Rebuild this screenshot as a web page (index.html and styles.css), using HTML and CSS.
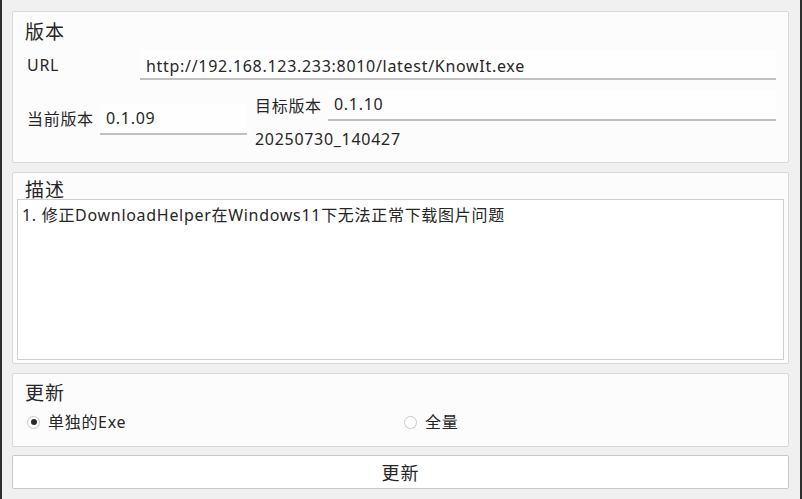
FILE: index.html
```html
<!DOCTYPE html>
<html lang="zh">
<head>
<meta charset="utf-8">
<link rel="stylesheet" href="styles.css">
</head>
<body>
<div class="window">
  <section class="group g-version">
    <div class="title">版本</div>
    <div class="row url-row">
      <span class="label url-label">URL</span>
      <div class="field url-field">http://192.168.123.233:8010/latest/KnowIt.exe</div>
    </div>
    <div class="row ver-row">
      <div class="cur">
        <span class="label">当前版本</span>
        <div class="field cur-field">0.1.09</div>
      </div>
      <div class="target">
        <div class="target-line">
          <span class="label">目标版本</span>
          <div class="field target-field">0.1.10</div>
        </div>
        <div class="build">20250730_140427</div>
      </div>
    </div>
  </section>
  <section class="group g-desc">
    <div class="title">描述</div>
    <div class="textarea">1. 修正DownloadHelper在Windows11下无法正常下载图片问题</div>
  </section>
  <section class="group g-update">
    <div class="title">更新</div>
    <div class="radios">
      <label class="radio"><span class="dot checked"></span>单独的Exe</label>
      <label class="radio"><span class="dot"></span>全量</label>
    </div>
  </section>
  <div class="button">更新</div>
</div>
</body>
</html>
```
FILE: styles.css
```css
html, body {
  margin: 0;
  padding: 0;
  width: 802px;
  height: 499px;
  overflow: hidden;
}
body {
  background: #f0f0f0;
  font-family: "Noto Sans", "Noto Sans CJK SC", sans-serif;
  color: #262626;
  font-size: 16px;
  letter-spacing: 0.7px;
}
.window {
  box-sizing: border-box;
  width: 802px;
  height: 499px;
  border-left: 2px solid #2e2e2e;
  border-right: 2px solid #2e2e2e;
  padding: 11px 11px 0 10px;
  display: flex;
  flex-direction: column;
  gap: 9px;
}
.group {
  background: #fcfcfc;
  border: 1px solid #d8d8d8;
  border-radius: 2px;
  box-sizing: border-box;
}
.title {
  font-size: 19px;
  line-height: 22px;
  padding-left: 12px;
  letter-spacing: 1px;
}
.g-version {
  height: 152px;
  padding-top: 9px;
}
.row { display: flex; }
.label { line-height: 20px; }
.url-row {
  align-items: center;
  padding-left: 14px;
  margin-top: 7px;
}
.url-label { width: 113px; }
.field {
  background: #fefefe;
  border-bottom: 2px solid #c0c0c0;
  line-height: 20px;
  padding: 6px 6px 2px 6px;
  box-sizing: border-box;
  height: 30px;
}
.url-field { width: 636px; }
.ver-row {
  padding-left: 14px;
  margin-top: 10px;
}
.cur {
  display: flex;
  align-items: center;
  margin-top: 13px;
  height: 32px;
}
.cur .label { width: 73px; }
.cur-field { width: 147px; height: 32px; padding-top: 5px; }
.target {
  margin-left: 8px;
}
.target-line {
  display: flex;
  align-items: center;
}
.target-line .label { width: 73px; }
.target-field { width: 448px; height: 31px; padding-top: 4px; }
.build {
  margin-top: 8px;
  line-height: 20px;
}
.g-desc {
  height: 192px;
  padding-top: 8px;
  display: flex;
  flex-direction: column;
}
.g-desc .title { line-height: 18px; }
.textarea {
  margin: 0 4px 3px 4px;
  flex: 1;
  background: #fff;
  border: 1px solid #cfcfcf;
  padding: 4px 4px 2px 4px;
  line-height: 22px;
}
.g-update {
  height: 74px;
  padding-top: 8px;
}
.radios {
  display: flex;
  padding-left: 14px;
  margin-top: 8px;
}
.radio {
  display: flex;
  align-items: center;
  width: 377px;
  line-height: 20px;
}
.dot {
  width: 11px;
  height: 11px;
  border: 1px solid #c8c8c8;
  border-radius: 50%;
  background: #fff;
  margin-right: 8px;
  position: relative;
}
.dot.checked::after {
  content: "";
  position: absolute;
  left: 2.5px;
  top: 2.5px;
  width: 6px;
  height: 6px;
  border-radius: 50%;
  background: #2a2a2a;
}
.button {
  margin-top: -1px;
  height: 34px;
  box-sizing: border-box;
  background: #fff;
  border: 1px solid #c8c8c8;
  border-radius: 2px;
  display: flex;
  align-items: center;
  justify-content: center;
  font-size: 18px;
  letter-spacing: 1px;
}
```
